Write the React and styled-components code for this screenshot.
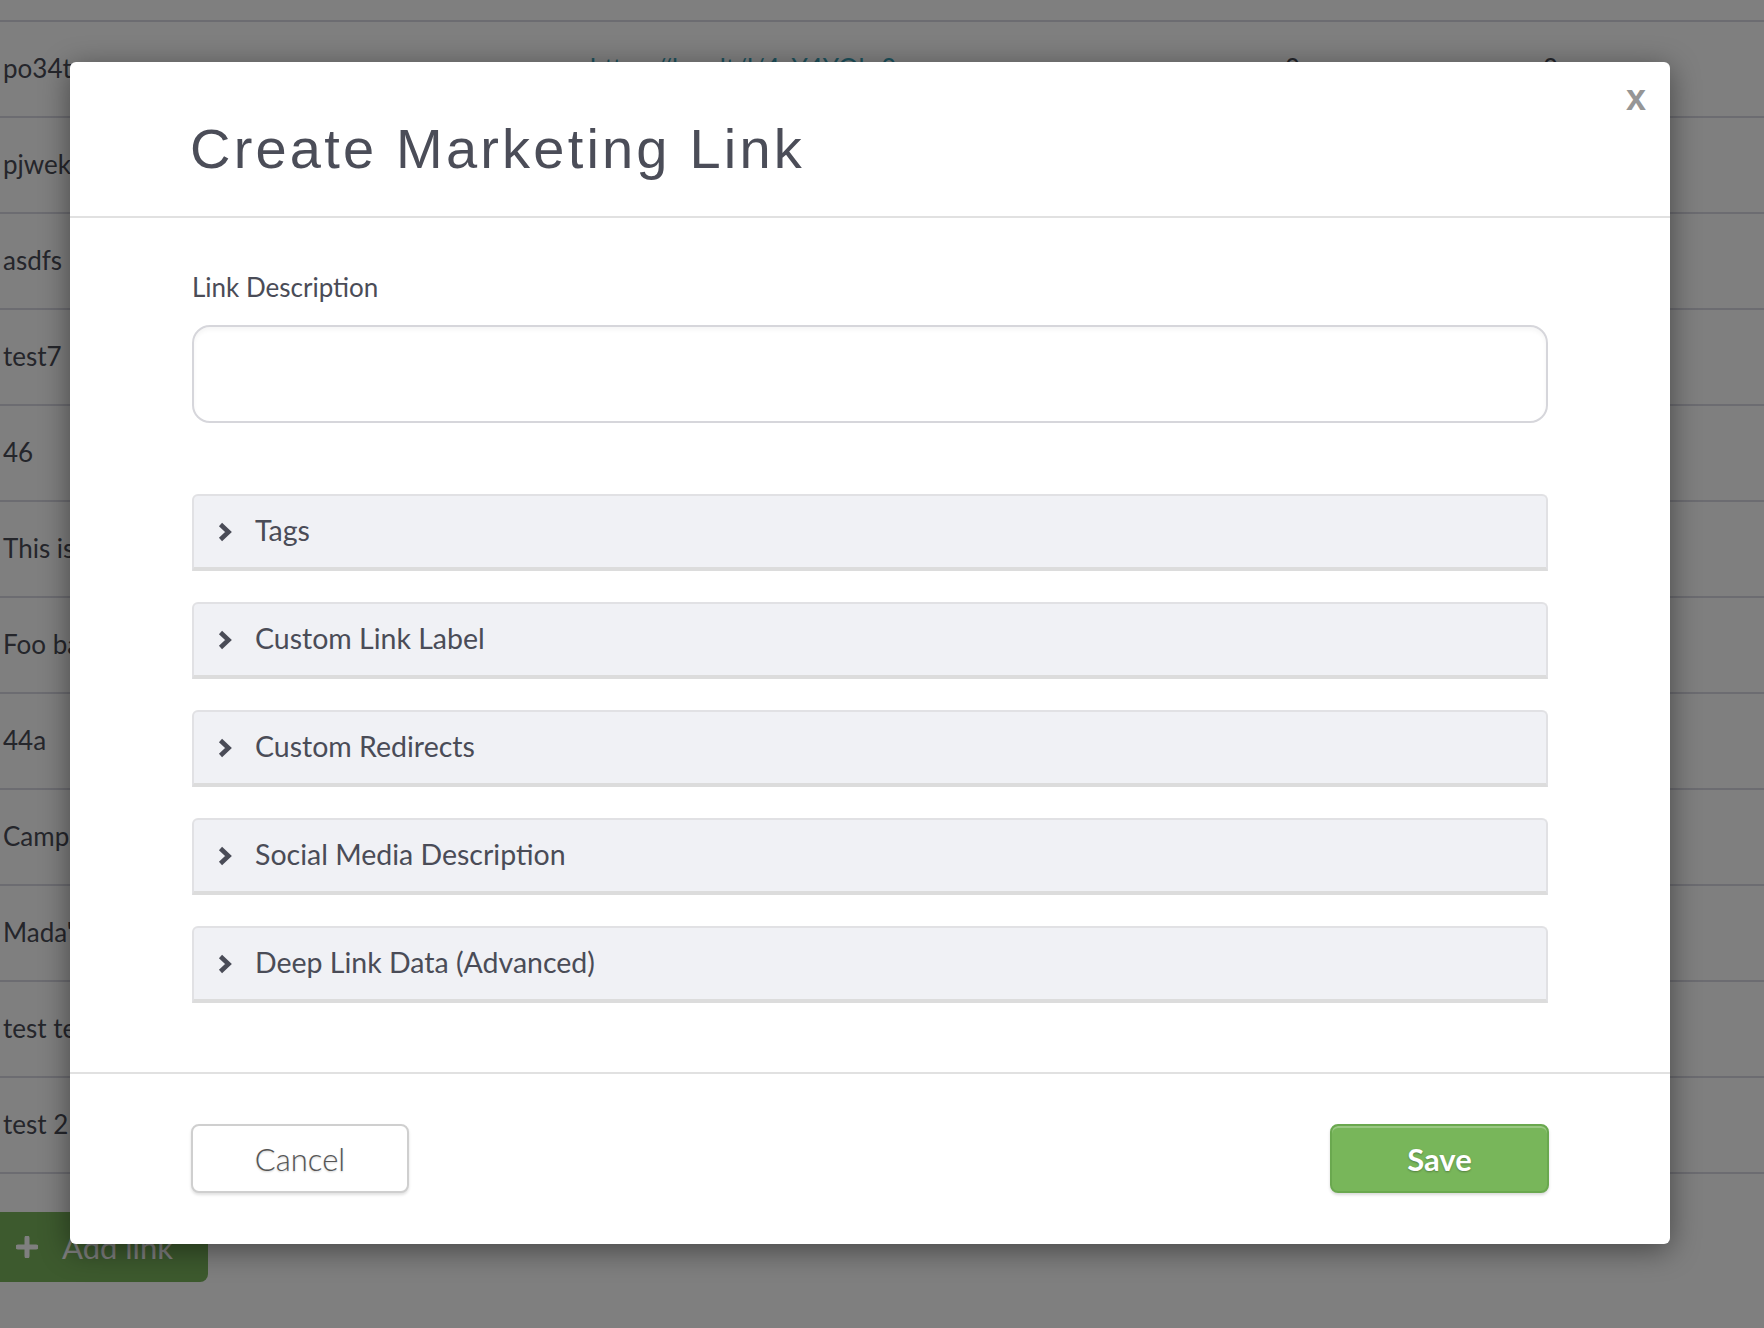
import { createGlobalStyle } from "styled-components";
import styled from "styled-components";

const GlobalStyle = createGlobalStyle`
  html, body {
    margin: 0;
    padding: 0;
    background: #ffffff;
    font-family: Lato, "Noto Sans", sans-serif;
    overflow: hidden;
  }
`;

const Page = styled.div`
  width: 1764px;
  height: 1328px;
  position: relative;
  overflow: hidden;
  background: #ffffff;
`;

const Table = styled.div`
  margin-top: 20px;
  border-top: 2px solid #d8d8e2;
`;

const Row = styled.div`
  display: grid;
  grid-template-columns: 587px 695px 258px 1fr;
  align-items: center;
  height: 94px;
  padding-left: 3px;
  padding-bottom: 3px;
  box-sizing: border-box;
  height: 96px;
  border-bottom: 2px solid #d8d8e2;
  font-size: 26px;
  color: #4a4c57;
`;

const LinkCell = styled.span`
  color: #3aa3b8;
`;

const AddLink = styled.button`
  display: flex;
  align-items: center;
  gap: 24px;
  margin-top: 38px;
  width: 208px;
  height: 70px;
  padding: 0 0 0 16px;
  border: none;
  border-radius: 0 8px 8px 0;
  background: #7ab45c;
  color: #ffffff;
  font-family: Lato, sans-serif;
  font-size: 31px;
`;

const Overlay = styled.div`
  position: absolute;
  inset: 0;
  background: rgba(0, 0, 0, 0.5);
`;

const Modal = styled.div`
  position: absolute;
  top: 62px;
  left: 70px;
  width: 1600px;
  background: #ffffff;
  border-radius: 6px;
  box-shadow: 0 6px 30px rgba(0, 0, 0, 0.45);
`;

const Header = styled.div`
  padding: 59px 120px 39px;
  border-bottom: 2px solid #e1e1e1;
`;

const Title = styled.h1`
  margin: 0;
  font-family: "Liberation Sans", Arial, sans-serif;
  font-weight: 400;
  font-size: 56px;
  line-height: 56px;
  letter-spacing: 3.2px;
  color: #4b4d58;
`;

const Close = styled.button`
  position: absolute;
  top: 18px;
  right: 24px;
  padding: 0;
  border: none;
  background: none;
  font-family: "Liberation Sans", Arial, sans-serif;
  font-weight: 700;
  font-size: 36px;
  line-height: 36px;
  color: #969696;
`;

const Body = styled.div`
  padding: 54px 122px 69px;
  border-bottom: 2px solid #e1e1e1;
`;

const Label = styled.label`
  display: block;
  font-size: 26px;
  line-height: 30px;
  color: #4a4c57;
`;

const Input = styled.input`
  display: block;
  box-sizing: border-box;
  width: 100%;
  height: 98px;
  margin-top: 23px;
  border: 2px solid #d6d6db;
  border-radius: 18px;
  box-shadow: inset 0 3px 4px rgba(0, 0, 0, 0.04);
  outline: none;
`;

const Sections = styled.div`
  display: flex;
  flex-direction: column;
  gap: 31px;
  margin-top: 71px;
`;

const Section = styled.div`
  box-sizing: border-box;
  display: flex;
  align-items: center;
  gap: 23px;
  height: 77px;
  padding: 0 0 3px 24px;
  background: #f0f1f5;
  border: 2px solid #e1e1e4;
  border-bottom: 4px solid #dcdcdc;
  border-radius: 6px 6px 0 0;
  font-size: 28.5px;
  color: #4a4c57;

  svg {
    margin-top: 3px;
  }
`;

const Footer = styled.div`
  display: flex;
  justify-content: space-between;
  padding: 50px 121px 51px;
`;

const Button = styled.button`
  box-sizing: border-box;
  width: 218px;
  height: 69px;
  border-radius: 8px;
  font-family: Lato, sans-serif;
  font-size: 31px;
  cursor: pointer;
`;

const Cancel = styled(Button)`
  background: #ffffff;
  border: 2px solid #cfcfcf;
  color: #555555;
  font-weight: 300;
  box-shadow: 0 2px 3px rgba(0, 0, 0, 0.12);
  text-shadow: 0 1px 2px rgba(0, 0, 0, 0.2);
`;

const Save = styled(Button)`
  width: 219px;
  background: #78b65a;
  border: 2px solid #6aa84f;
  color: #ffffff;
  font-weight: 700;
  box-shadow: inset 0 2px 0 rgba(255, 255, 255, 0.25), 0 2px 3px rgba(0, 0, 0, 0.15);
  text-shadow: 0 1px 2px rgba(0, 0, 0, 0.3);
`;

const Chevron = () => (
  <svg width="14" height="20" viewBox="0 0 14 20">
    <polyline points="2.5,2.5 10.5,10 2.5,17.5" fill="none" stroke="#4a4c57" strokeWidth="4.6" strokeLinejoin="miter" />
  </svg>
);

const rows = [
  ["po34tre", "https://bnc.lt/l/4xY4YOkr0", "0", "0"],
  ["pjweko", "", "", ""],
  ["asdfs", "", "", ""],
  ["test7", "", "", ""],
  ["46", "", "", ""],
  ["This is a link", "", "", ""],
  ["Foo bar", "", "", ""],
  ["44a", "", "", ""],
  ["Campaign", "", "", ""],
  ["Mada's link", "", "", ""],
  ["test test", "", "", ""],
  ["test 2", "", "", ""],
];

const sections = ["Tags", "Custom Link Label", "Custom Redirects", "Social Media Description", "Deep Link Data (Advanced)"];

function App() {
  return (
    <Page>
      <GlobalStyle />
      <Table>
        {rows.map((r, i) => (
          <Row key={i}>
            <span>{r[0]}</span>
            <LinkCell>{r[1]}</LinkCell>
            <span>{r[2]}</span>
            <span>{r[3]}</span>
          </Row>
        ))}
      </Table>
      <AddLink>
        <svg width="22" height="22" viewBox="0 0 22 22">
          <path d="M11 2v18M2 11h18" stroke="#ffffff" strokeWidth="5" strokeLinecap="round" />
        </svg>
        Add link
      </AddLink>
      <Overlay />
      <Modal>
        <Close>x</Close>
        <Header>
          <Title>Create Marketing Link</Title>
        </Header>
        <Body>
          <Label>Link Description</Label>
          <Input />
          <Sections>
            {sections.map((s) => (
              <Section key={s}>
                <Chevron />
                {s}
              </Section>
            ))}
          </Sections>
        </Body>
        <Footer>
          <Cancel>Cancel</Cancel>
          <Save>Save</Save>
        </Footer>
      </Modal>
    </Page>
  );
}

export default App;
